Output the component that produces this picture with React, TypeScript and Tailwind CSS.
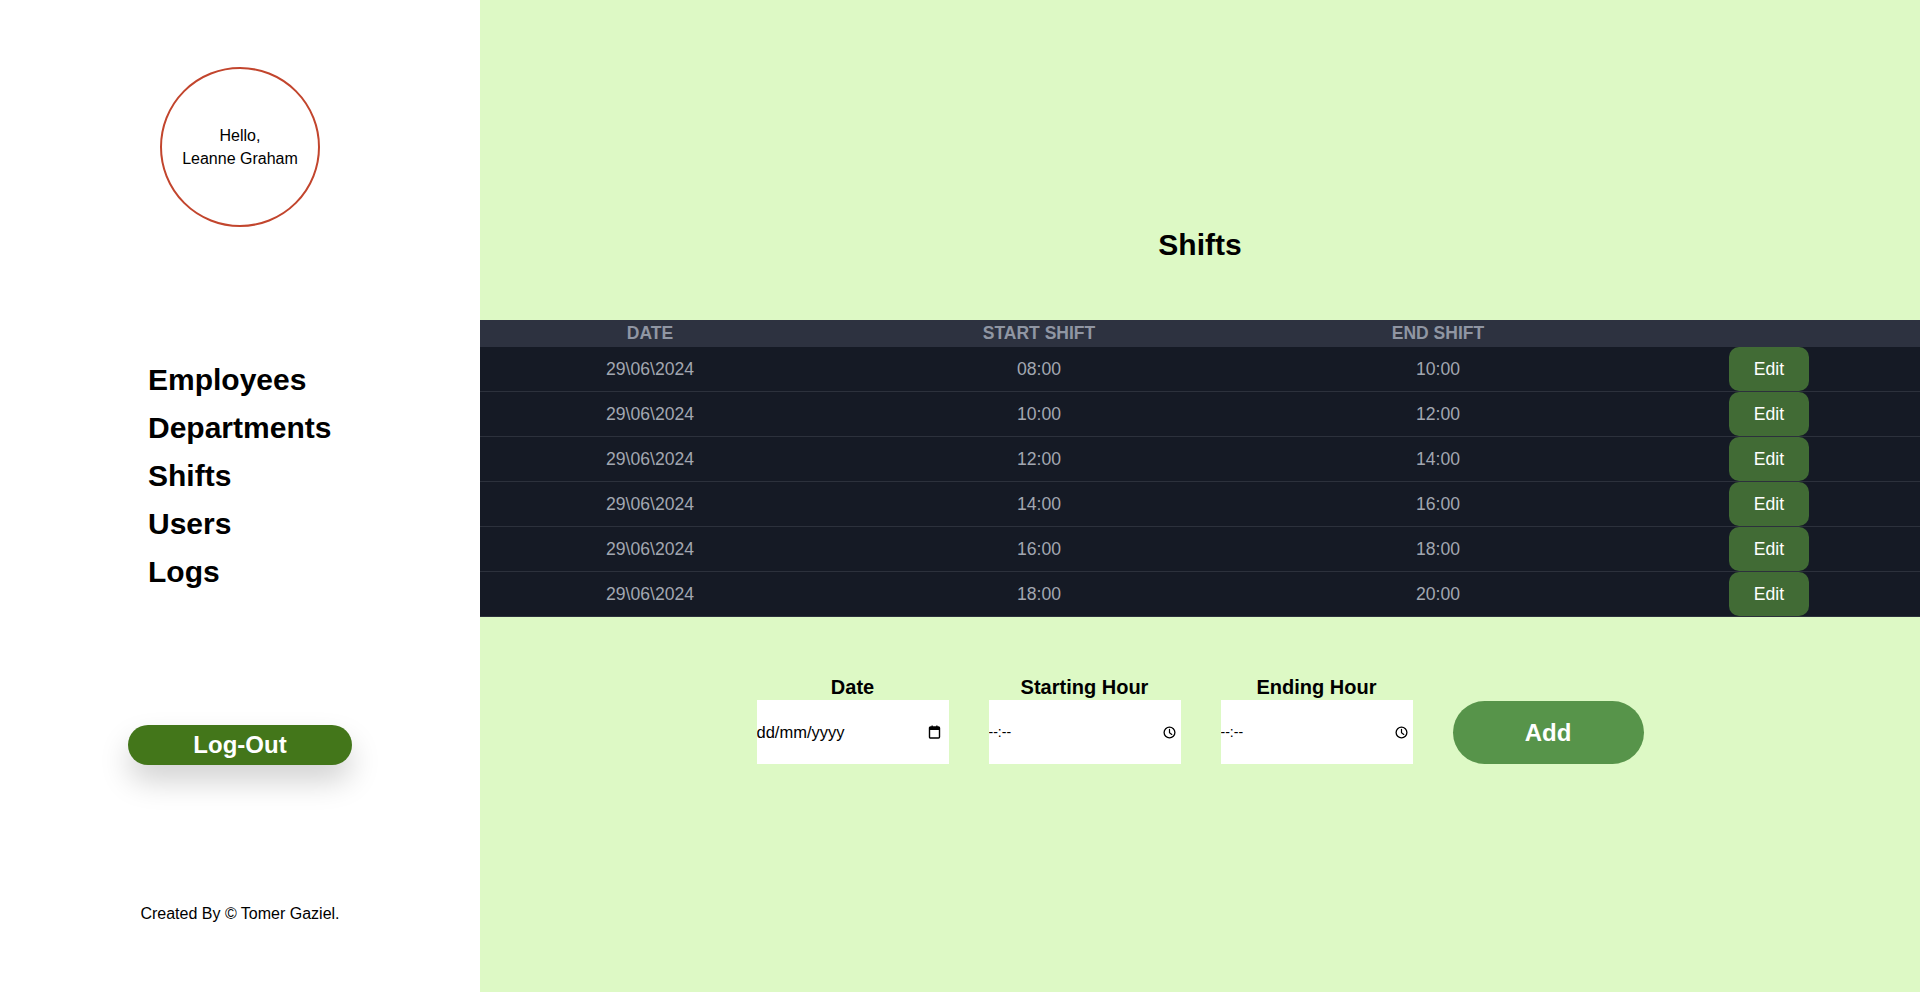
import React from "react";

type Shift = { date: string; start: string; end: string };

const shifts: Shift[] = [
  { date: "29\\06\\2024", start: "08:00", end: "10:00" },
  { date: "29\\06\\2024", start: "10:00", end: "12:00" },
  { date: "29\\06\\2024", start: "12:00", end: "14:00" },
  { date: "29\\06\\2024", start: "14:00", end: "16:00" },
  { date: "29\\06\\2024", start: "16:00", end: "18:00" },
  { date: "29\\06\\2024", start: "18:00", end: "20:00" },
];

const navItems = ["Employees", "Departments", "Shifts", "Users", "Logs"];

const Sidebar: React.FC = () => {
  return (
    <aside className="w-[480px] shrink-0 bg-white flex flex-col items-center h-[992px]">
      <div className="mt-[67px] w-[160px] h-[160px] rounded-full border-2 border-[#c2452d] flex flex-col items-center justify-center text-[16px] leading-[23px] text-black">
        <span>Hello,</span>
        <span>Leanne Graham</span>
      </div>
      <nav className="mt-[129px] self-start pl-[148px]">
        <ul>
          {navItems.map((item) => (
            <li key={item} className="text-[30px] leading-[48px] font-bold text-black">
              {item}
            </li>
          ))}
        </ul>
      </nav>
      <button className="mt-[129px] w-[224px] h-[40px] rounded-full bg-[#43761a] text-white font-bold text-[24px] leading-[40px] shadow-[0_16px_30px_rgba(0,0,0,0.18)]">
        Log-Out
      </button>
      <p className="mt-[137px] text-[16px] leading-[24px] text-black">Created By © Tomer Gaziel.</p>
    </aside>
  );
};

const ShiftsTable: React.FC = () => {
  const cols = "grid grid-cols-[340px_438px_360px_302px]";
  return (
    <div className="w-full bg-[#151a25]">
      <div className={`${cols} bg-[#2d3240] h-[27px] items-center text-[17.5px] font-bold uppercase text-[#9096a3] leading-[27px]`}>
        <div className="text-center">Date</div>
        <div className="text-center">Start Shift</div>
        <div className="text-center">End Shift</div>
        <div></div>
      </div>
      {shifts.map((s, i) => (
        <div
          key={i}
          className={`${cols} h-[45px] border-b border-[#2c313c] text-[17.6px] text-[#a2a7b1]`}
        >
          <div className="flex items-center justify-center">{s.date}</div>
          <div className="flex items-center justify-center">{s.start}</div>
          <div className="flex items-center justify-center">{s.end}</div>
          <div className="flex items-start justify-center">
            <button className="w-[80px] h-[44px] rounded-[10px] bg-[#416b35] text-white text-[17.6px]">
              Edit
            </button>
          </div>
        </div>
      ))}
    </div>
  );
};

const CalendarIcon = () => (
  <svg width="13" height="14" viewBox="0 0 13 14" fill="none">
    <rect x="1.5" y="2" width="10" height="11" rx="1" stroke="black" strokeWidth="1.4" />
    <rect x="1.5" y="2" width="10" height="3" fill="black" />
    <rect x="3.5" y="0.5" width="1.3" height="2.5" fill="black" />
    <rect x="8.2" y="0.5" width="1.3" height="2.5" fill="black" />
  </svg>
);

const ClockIcon = () => (
  <svg width="13" height="13" viewBox="0 0 13 13" fill="none">
    <circle cx="6.5" cy="6.5" r="5.4" stroke="black" strokeWidth="1.3" />
    <path d="M6.5 3.3V6.7L8.8 8.4" stroke="black" strokeWidth="1.2" strokeLinecap="round" />
  </svg>
);

const Field: React.FC<{
  label: string;
  placeholder: string;
  icon: React.ReactNode;
  extra: string;
}> = ({ label, placeholder, icon, extra }) => (
  <label className="flex flex-col items-center">
    <span className="text-[20px] font-bold leading-[26px] text-black">{label}</span>
    <div className={`w-[192px] h-[64px] bg-white flex items-center ${extra}`}>
      <input
        type="text"
        placeholder={placeholder}
        className="flex-1 min-w-0 h-full bg-transparent border-0 outline-none px-0 text-inherit text-black placeholder:text-black font-['Liberation_Sans',sans-serif]"
      />
      {icon}
    </div>
  </label>
);

export default function App() {
  return (
    <div className="flex w-[1920px] h-[992px] overflow-hidden font-['Liberation_Sans',Arial,sans-serif]">
      <Sidebar />
      <main className="flex-1 bg-[#ddf9c5] flex flex-col items-center">
        <h1 className="mt-[227px] text-[30px] font-bold leading-[36px] text-black">Shifts</h1>
        <div className="mt-[57px] w-full">
          <ShiftsTable />
        </div>
        <form className="mt-[57px] flex items-end gap-10" onSubmit={(e) => e.preventDefault()}>
          <Field label="Date" placeholder="dd/mm/yyyy" icon={<CalendarIcon />} extra="pr-[8px] text-[16.5px]" />
          <Field label="Starting Hour" placeholder="--:--" icon={<ClockIcon />} extra="pr-[5px] text-[14px]" />
          <Field label="Ending Hour" placeholder="--:--" icon={<ClockIcon />} extra="pr-[5px] text-[14px]" />
          <button
            type="submit"
            className="w-[191px] h-[63px] rounded-full bg-[#57944a] text-white font-bold text-[24px]"
          >
            Add
          </button>
        </form>
      </main>
    </div>
  );
}
